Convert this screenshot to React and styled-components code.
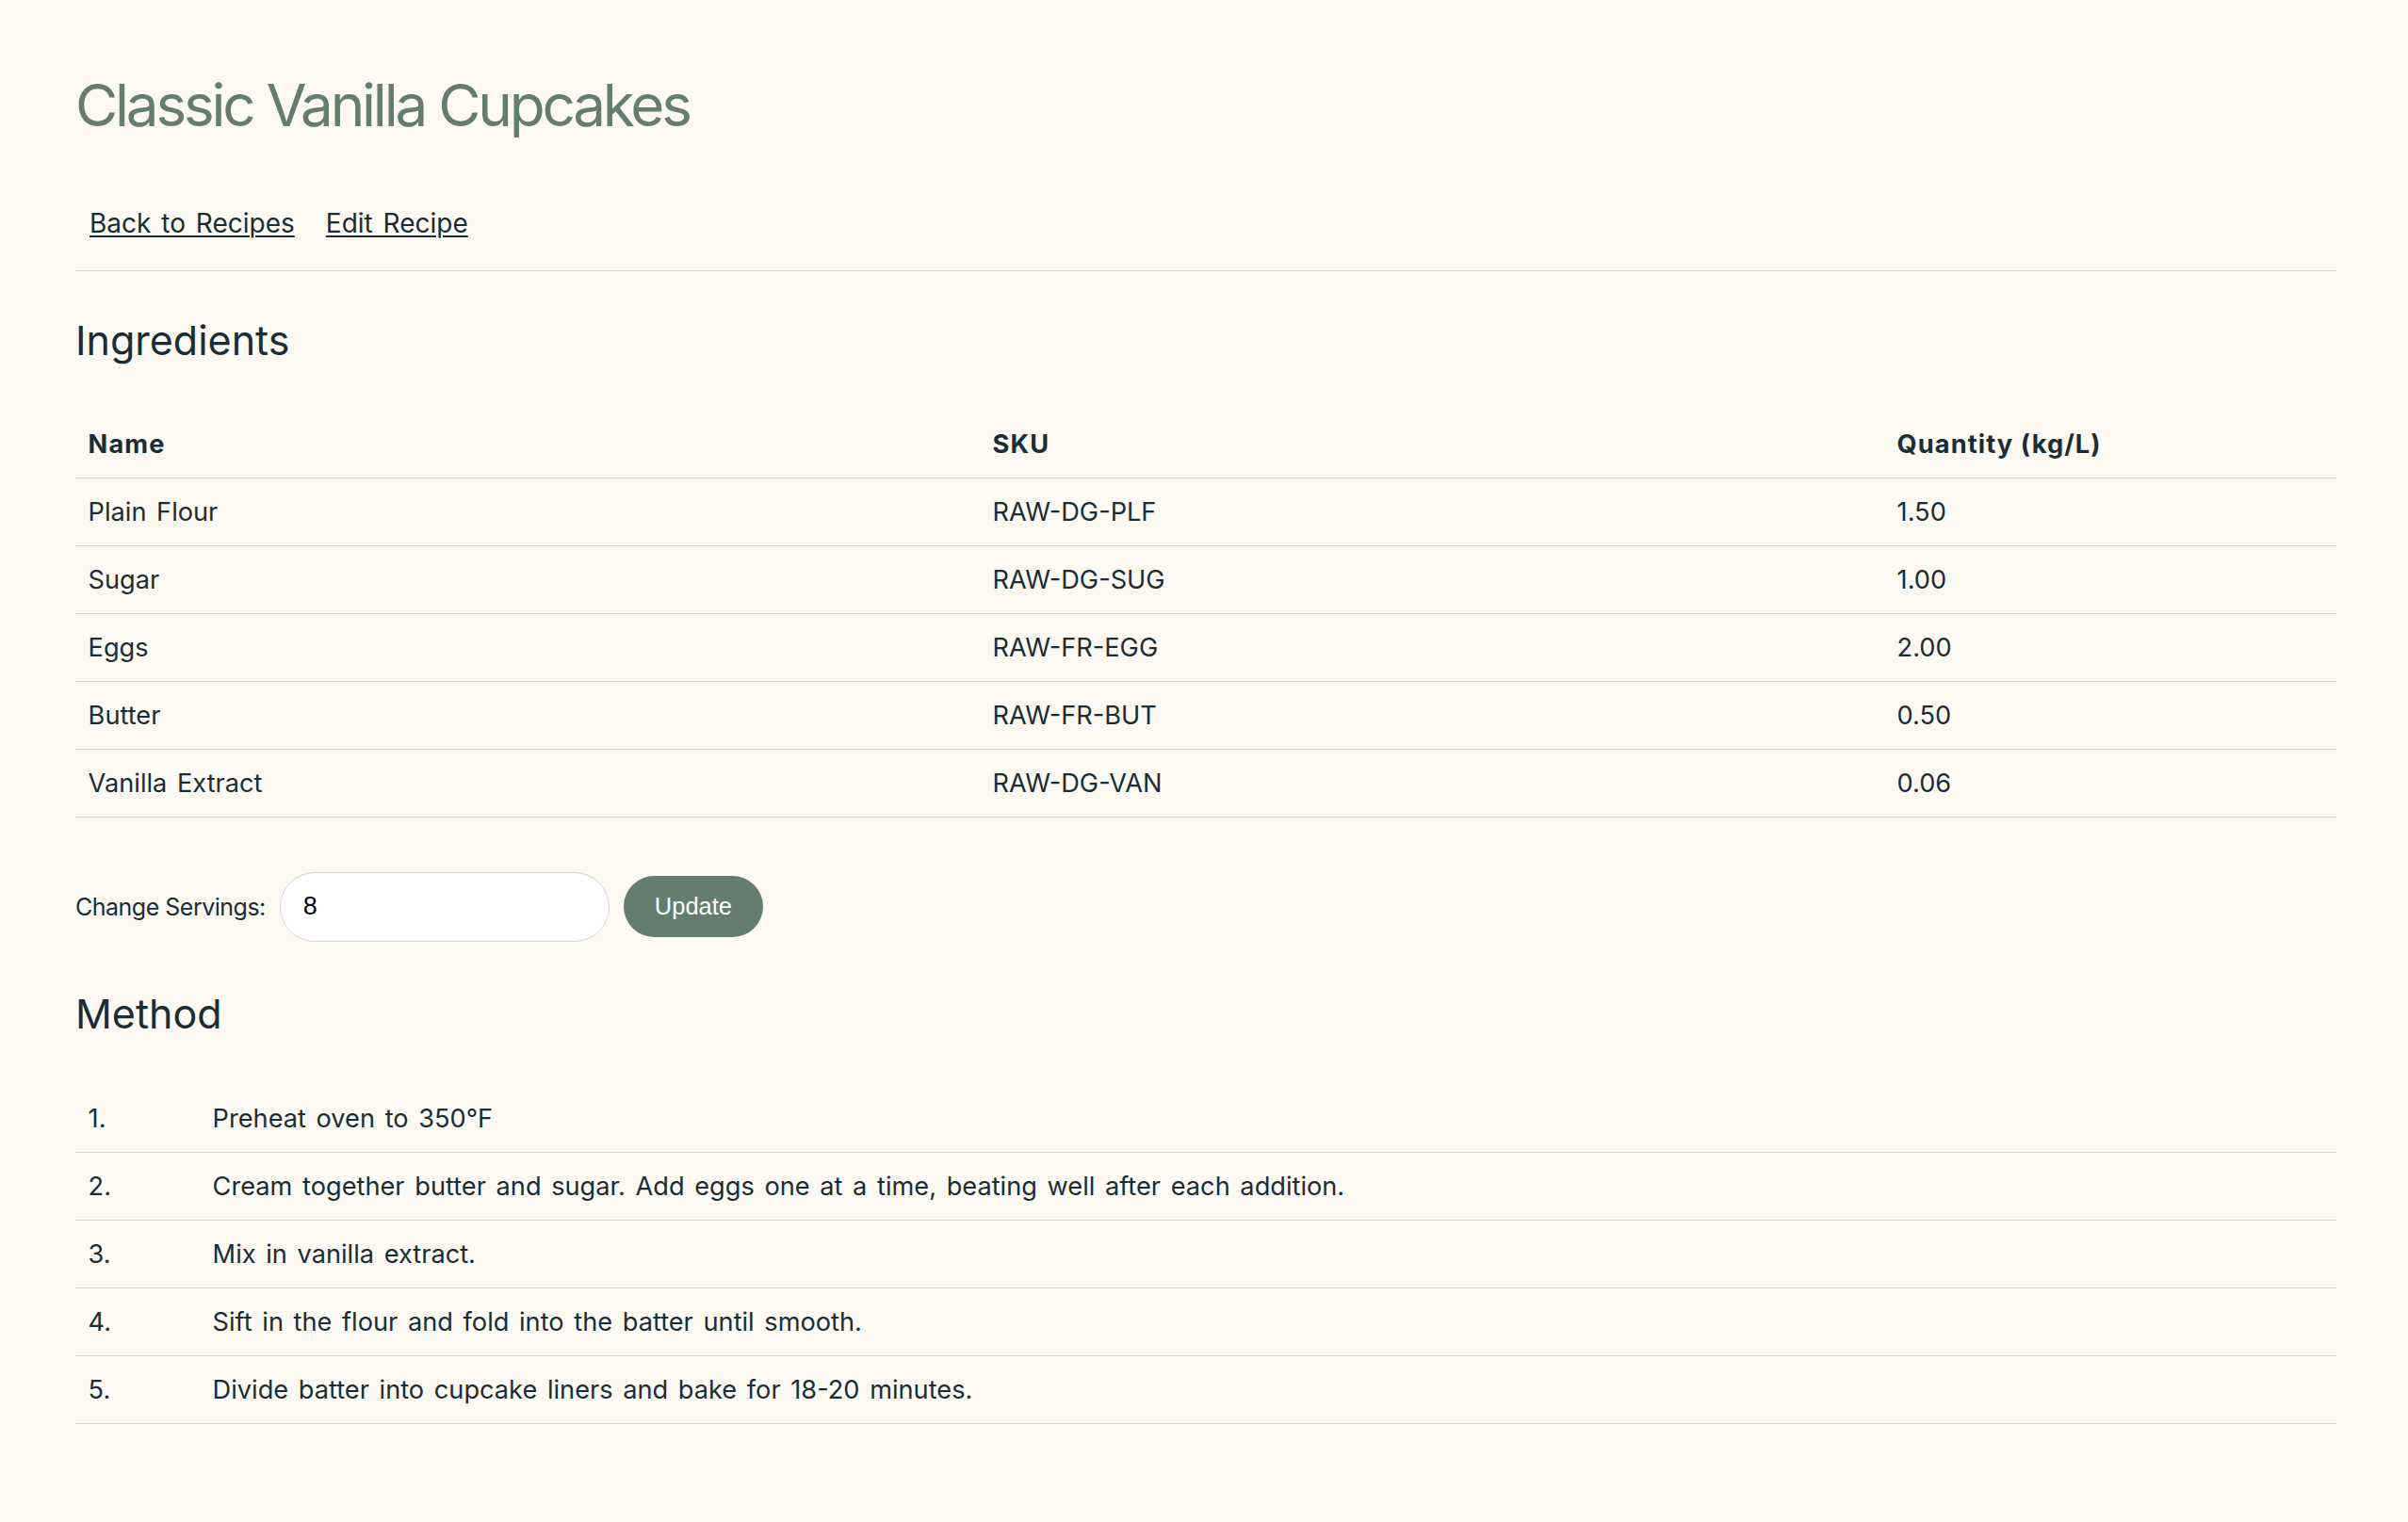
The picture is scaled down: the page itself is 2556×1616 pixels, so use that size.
import React from "react";
import styled, { createGlobalStyle } from "styled-components";

const GlobalStyle = createGlobalStyle`
  html, body { margin: 0; padding: 0; background: #fcf9f3; }
  body {
    font-family: Inter, "Noto Sans", sans-serif;
    color: #1b2d34;
    font-size: 27.2px;
    line-height: 1.6;
  }
  * { box-sizing: border-box; }
`;

const Page = styled.main`
  width: 2400px;
  margin-left: 80px;
  padding: 74.5px 0 80px;
`;

const Title = styled.h1`
  margin: 0;
  font-size: 62px;
  line-height: 1.2;
  font-weight: 400;
  letter-spacing: -0.052em;
  color: #657d6e;
`;

const Nav = styled.nav`
  margin-top: 66.5px;
  padding-bottom: 26.5px;
  border-bottom: 1px solid #d4d4d2;
  display: flex;
  gap: 3px;
`;

const NavLink = styled.a`
  padding: 0 15px;
  color: #1b2d34;
  text-decoration: underline;
  text-underline-offset: 3px;
  text-decoration-thickness: 2px;
  font-size: 28px;
  word-spacing: 3px;
  cursor: pointer;
`;

const SectionTitle = styled.h2`
  margin: ${(p) => p.$top}px 0 ${(p) => p.$bottom}px;
  font-size: 43px;
  line-height: 1.2;
  font-weight: 400;
  color: #1b2d34;
`;

const Table = styled.table`
  width: 100%;
  border-collapse: collapse;
  table-layout: fixed;
`;

const Th = styled.th`
  text-align: left;
  font-weight: 700;
  padding: 14px 13.6px;
  line-height: 43px;
  border-bottom: 1px solid #d4d4d2;
  width: ${(p) => p.$w};
  letter-spacing: 0.04em;
`;

const Td = styled.td`
  padding: 14px 13.6px;
  line-height: 43px;
  border-bottom: 1px solid #d4d4d2;
  word-spacing: 3px;
`;

const ServingsForm = styled.form`
  margin-top: 57.5px;
  display: flex;
  align-items: center;
  gap: 15px;
`;

const Label = styled.label`
  font-size: 25px;
  letter-spacing: -0.02em;
  color: #1b2d34;
`;

const Input = styled.input`
  width: 350px;
  height: 74px;
  border-radius: 37px;
  border: 1px solid #d6d6d6;
  background: #fff;
  padding: 0 24px;
  font-family: "Liberation Sans", Arial, sans-serif;
  font-size: 27px;
  color: #000;
  outline: none;
`;

const Button = styled.button`
  height: 65px;
  padding: 0 33px;
  border: none;
  border-radius: 33px;
  background: #657d6e;
  color: #fff;
  font-family: "Liberation Sans", Arial, sans-serif;
  font-size: 25.5px;
  cursor: pointer;
`;

const Steps = styled.ol`
  list-style: none;
  margin: 50px 0 0;
  padding: 0;
`;

const Step = styled.li`
  display: grid;
  grid-template-columns: 132px 1fr;
  border-bottom: 1px solid #d4d4d2;
`;

const StepCell = styled.span`
  padding: 14px 13.6px;
  line-height: 43px;
  word-spacing: 3px;
`;

const ingredients = [
  ["Plain Flour", "RAW-DG-PLF", "1.50"],
  ["Sugar", "RAW-DG-SUG", "1.00"],
  ["Eggs", "RAW-FR-EGG", "2.00"],
  ["Butter", "RAW-FR-BUT", "0.50"],
  ["Vanilla Extract", "RAW-DG-VAN", "0.06"],
];

const steps = [
  "Preheat oven to 350°F",
  "Cream together butter and sugar. Add eggs one at a time, beating well after each addition.",
  "Mix in vanilla extract.",
  "Sift in the flour and fold into the batter until smooth.",
  "Divide batter into cupcake liners and bake for 18-20 minutes.",
];

export default function App() {
  return (
    <>
      <GlobalStyle />
      <Page>
        <Title>Classic Vanilla Cupcakes</Title>
        <Nav>
          <NavLink>Back to Recipes</NavLink>
          <NavLink>Edit Recipe</NavLink>
        </Nav>

        <SectionTitle $top={48} $bottom={49}>Ingredients</SectionTitle>
        <Table>
          <thead>
            <tr>
              <Th $w="40%">Name</Th>
              <Th $w="40%">SKU</Th>
              <Th $w="20%">Quantity (kg/L)</Th>
            </tr>
          </thead>
          <tbody>
            {ingredients.map(([n, s, q]) => (
              <tr key={s}>
                <Td>{n}</Td>
                <Td>{s}</Td>
                <Td>{q}</Td>
              </tr>
            ))}
          </tbody>
        </Table>

        <ServingsForm onSubmit={(e) => e.preventDefault()}>
          <Label htmlFor="servings">Change Servings:</Label>
          <Input id="servings" type="text" defaultValue="8" />
          <Button type="submit">Update</Button>
        </ServingsForm>

        <SectionTitle $top={51} $bottom={0}>Method</SectionTitle>
        <Steps>
          {steps.map((t, i) => (
            <Step key={i}>
              <StepCell>{i + 1}.</StepCell>
              <StepCell>{t}</StepCell>
            </Step>
          ))}
        </Steps>
      </Page>
    </>
  );
}
